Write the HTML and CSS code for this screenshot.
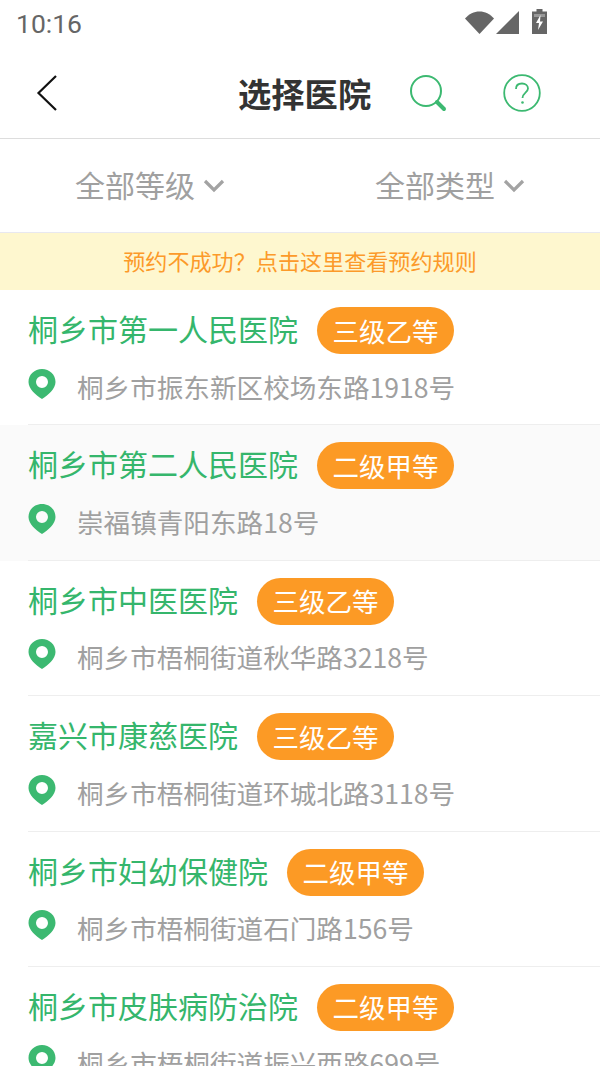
FILE: index.html
```html
<!DOCTYPE html>
<html lang="zh-CN">
<head>
<meta charset="utf-8">
<title>选择医院</title>
<link rel="stylesheet" href="styles.css">
</head>
<body>
<div class="page">
  <div class="status">
    <span class="time">10:16</span>
    <span class="status-icons">
      <svg width="29" height="23" viewBox="0 0 29 23"><path d="M0 7.500C4 3 9 .5 14.500 .5S25 3 29 7.500L14.500 23Z" fill="#666"/></svg>
      <svg width="23" height="23" viewBox="0 0 23 23" class="sig"><path d="M23 0V23H0Z" fill="#666"/></svg>
      <svg width="15" height="25" viewBox="0 0 15 25" class="bat"><path d="M4.500 0H10.500V2.500H15V25H0V2.500H4.500Z" fill="#666"/><path d="M2 5H13V8H2Z" fill="#999"/><path d="M8.500 6L4 14H7L6 21L11 12.500H8Z" fill="#fff"/></svg>
    </span>
  </div>
  <header class="nav">
    <svg class="back" width="22" height="38" viewBox="0 0 22 38"><path d="M20 2L2.500 19L20 36" fill="none" stroke="#111" stroke-width="2.200"/></svg>
    <h1 class="title">选择医院</h1>
    <svg class="search" width="38" height="38" viewBox="0 0 38 38"><circle cx="17" cy="17" r="15" fill="none" stroke="#3cb971" stroke-width="2"/><path d="M28 28L35 35" stroke="#3cb971" stroke-width="4" stroke-linecap="round"/></svg>
    <svg class="help" width="38" height="38" viewBox="0 0 38 38"><circle cx="19" cy="19" r="17.800" fill="none" stroke="#3cb971" stroke-width="1.800"/><path d="M13 15C13 11 16 9.500 19 9.500C22.500 9.500 25 11.500 25 14.500C25 18.500 19.500 19 19.500 24" fill="none" stroke="#3cb971" stroke-width="1.800"/><circle cx="19.500" cy="28.500" r="1.300" fill="#3cb971"/></svg>
  </header>
  <div class="filters">
    <div class="filter"><span class="filter-label">全部等级</span><svg width="22" height="14" viewBox="0 0 22 14"><path d="M2 2L11 11L20 2" fill="none" stroke="#a3a3a3" stroke-width="3.200"/></svg></div>
    <div class="filter"><span class="filter-label">全部类型</span><svg width="22" height="14" viewBox="0 0 22 14"><path d="M2 2L11 11L20 2" fill="none" stroke="#a3a3a3" stroke-width="3.200"/></svg></div>
  </div>
  <div class="notice"><span class="notice-text">预约不成功？点击这里查看预约规则</span></div>
  <ul class="list">
    <li class="row"><div class="head"><span class="name">桐乡市第一人民医院</span><span class="tag">三级乙等</span></div><div class="addr"><svg class="pin" width="28" height="32" viewBox="0 0 28 32"><path fill-rule="evenodd" d="M14 1C21.500 1 27.500 6.500 27.500 14C27.500 21 20 27 14 31C8 27 .5 21 .5 14C.5 6.500 6.500 1 14 1ZM14 8A6 6 0 1 0 14 20A6 6 0 1 0 14 8Z" fill="#3cb971"/></svg><span class="addr-text">桐乡市振东新区校场东路1918号</span></div></li>
    <li class="row active"><div class="head"><span class="name">桐乡市第二人民医院</span><span class="tag">二级甲等</span></div><div class="addr"><svg class="pin" width="28" height="32" viewBox="0 0 28 32"><path fill-rule="evenodd" d="M14 1C21.500 1 27.500 6.500 27.500 14C27.500 21 20 27 14 31C8 27 .5 21 .5 14C.5 6.500 6.500 1 14 1ZM14 8A6 6 0 1 0 14 20A6 6 0 1 0 14 8Z" fill="#3cb971"/></svg><span class="addr-text">崇福镇青阳东路18号</span></div></li>
    <li class="row"><div class="head"><span class="name">桐乡市中医医院</span><span class="tag">三级乙等</span></div><div class="addr"><svg class="pin" width="28" height="32" viewBox="0 0 28 32"><path fill-rule="evenodd" d="M14 1C21.500 1 27.500 6.500 27.500 14C27.500 21 20 27 14 31C8 27 .5 21 .5 14C.5 6.500 6.500 1 14 1ZM14 8A6 6 0 1 0 14 20A6 6 0 1 0 14 8Z" fill="#3cb971"/></svg><span class="addr-text">桐乡市梧桐街道秋华路3218号</span></div></li>
    <li class="row"><div class="head"><span class="name">嘉兴市康慈医院</span><span class="tag">三级乙等</span></div><div class="addr"><svg class="pin" width="28" height="32" viewBox="0 0 28 32"><path fill-rule="evenodd" d="M14 1C21.500 1 27.500 6.500 27.500 14C27.500 21 20 27 14 31C8 27 .5 21 .5 14C.5 6.500 6.500 1 14 1ZM14 8A6 6 0 1 0 14 20A6 6 0 1 0 14 8Z" fill="#3cb971"/></svg><span class="addr-text">桐乡市梧桐街道环城北路3118号</span></div></li>
    <li class="row"><div class="head"><span class="name">桐乡市妇幼保健院</span><span class="tag">二级甲等</span></div><div class="addr"><svg class="pin" width="28" height="32" viewBox="0 0 28 32"><path fill-rule="evenodd" d="M14 1C21.500 1 27.500 6.500 27.500 14C27.500 21 20 27 14 31C8 27 .5 21 .5 14C.5 6.500 6.500 1 14 1ZM14 8A6 6 0 1 0 14 20A6 6 0 1 0 14 8Z" fill="#3cb971"/></svg><span class="addr-text">桐乡市梧桐街道石门路156号</span></div></li>
    <li class="row"><div class="head"><span class="name">桐乡市皮肤病防治院</span><span class="tag">二级甲等</span></div><div class="addr"><svg class="pin" width="28" height="32" viewBox="0 0 28 32"><path fill-rule="evenodd" d="M14 1C21.500 1 27.500 6.500 27.500 14C27.500 21 20 27 14 31C8 27 .5 21 .5 14C.5 6.500 6.500 1 14 1ZM14 8A6 6 0 1 0 14 20A6 6 0 1 0 14 8Z" fill="#3cb971"/></svg><span class="addr-text">桐乡市梧桐街道振兴西路699号</span></div></li>
  </ul>
</div>
</body>
</html>
```
FILE: styles.css
```css
* { box-sizing: border-box; }
html, body { margin: 0; padding: 0; background: #fff; overflow: hidden; }
body { font-family: "Noto Sans CJK SC", "Noto Sans", sans-serif; }
.page { width: 600px; height: 1066px; overflow: hidden; }

.status { height: 48px; display: flex; align-items: flex-start; justify-content: space-between; padding: 6px 53px 0 16px; }
.time { font-family: Roboto, sans-serif; font-size: 26.500px; line-height: 36px; color: #666; }
.status-icons { display: flex; align-items: flex-start; padding-top: 5px; }
.status-icons svg { display: block; }
.status-icons .sig { margin-left: 2px; }
.status-icons .bat { margin-left: 13px; margin-top: -2px; }

.nav { height: 91px; display: flex; align-items: center; padding: 0 58px 0 36px; border-bottom: 1px solid #ddd; }
.title { margin: 0 0 0 180px; font-size: 33.300px; line-height: 44px; font-weight: 700; color: #333; white-space: nowrap; }
.search { margin-left: 38px; }
.help { margin-left: 56px; }

.filters { height: 94px; display: flex; border-bottom: 1px solid #e8e8f0; }
.filter { flex: 1; display: flex; align-items: center; justify-content: center; gap: 8px; font-size: 30px; color: #a0a0a0; }
.filter-label { padding-bottom: 4px; }

.notice { height: 57px; background: #fef7cf; color: #fc9a2a; font-size: 22.100px; display: flex; align-items: center; justify-content: center; }
.notice-text { padding-bottom: 3px; }

.list { list-style: none; margin: 0; padding: 0; }
.row { height: 135.400px; padding: 17px 0 0 28px; position: relative; }
.row::after { content: ""; position: absolute; left: 28px; right: 0; bottom: 0; height: 1px; background: #eee; }
.row.active { background: #fafafa; }
.head { display: flex; align-items: center; height: 47px; }
.name { font-size: 30px; color: #35b66c; white-space: nowrap; padding-bottom: 5px; }
.tag { margin-left: 19px; width: 137px; height: 47px; border-radius: 24px; background: #fc9a25; color: #fff; font-size: 26.500px; display: flex; align-items: center; justify-content: center; padding-bottom: 1px; }
.addr { display: flex; align-items: center; height: 40px; margin-top: 13px; color: #a0a0a0; font-size: 26.600px; white-space: nowrap; }
.addr-text { padding-bottom: 2px; }
.pin { margin-right: 21px; margin-top: -7px; flex: none; }
```
